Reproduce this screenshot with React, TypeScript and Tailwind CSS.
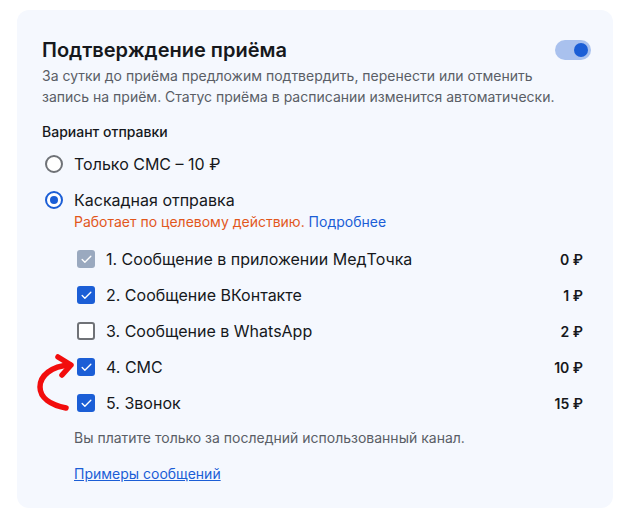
import { Check } from 'lucide-react';

const CHANNELS = [
  { label: '1. Сообщение в приложении МедТочка', price: '0 ₽', state: 'locked' },
  { label: '2. Сообщение ВКонтакте', price: '1 ₽', state: 'on' },
  { label: '3. Сообщение в WhatsApp', price: '2 ₽', state: 'off' },
  { label: '4. СМС', price: '10 ₽', state: 'on' },
  { label: '5. Звонок', price: '15 ₽', state: 'on' },
];

function Box({ state }: { state: string }) {
  if (state === 'off') {
    return <span className="h-[18px] w-[18px] rounded-[3px] border-2 border-[#6f7277] bg-white" />;
  }
  return (
    <span
      className={
        'flex h-[18px] w-[18px] items-center justify-center rounded-[3px] ' +
        (state === 'locked' ? 'bg-[#9aa9bf]' : 'bg-[#1b5ed6]')
      }
    >
      <Check className="h-[13px] w-[13px] text-white" strokeWidth={2.5} />
    </span>
  );
}

export default function App() {
  return (
    <div className="min-h-screen bg-white pl-[17px] pr-[18px] pt-[10px] font-['Inter',sans-serif]">
      <div className="relative rounded-xl bg-[#f5f8fe] px-[25px] pb-[23px] pt-[26px]">
        <div className="flex items-center justify-between">
          <h1 className="text-[20px] font-semibold leading-[28px] text-[#16181c]">Подтверждение приёма</h1>
          <span className="mr-[-3px] flex h-[20px] w-[36px] items-center justify-end rounded-full bg-[#a9c1ee] pr-[3px]">
            <span className="h-[14px] w-[14px] rounded-full bg-[#1b5ed6]" />
          </span>
        </div>
        <p className="mt-[1px] whitespace-nowrap text-[14px] leading-[21px] text-[#5a5e66]">
          За сутки до приёма предложим подтвердить, перенести или отменить
          <br />
          запись на приём. Статус приёма в расписании изменится автоматически.
        </p>

        <div className="mt-[15px] text-[14px] font-medium leading-[20px] text-[#16181c]">Вариант отправки</div>

        <div className="mt-[11px] flex items-center gap-[11px]">
          <span className="ml-[3px] h-[18px] w-[18px] rounded-full border-2 border-[#6f7277] bg-white" />
          <span className="text-[16px] leading-[22px] text-[#16181c]">Только СМС – 10 ₽</span>
        </div>
        <div className="mt-[14px] flex items-center gap-[11px]">
          <span className="ml-[3px] flex h-[18px] w-[18px] items-center justify-center rounded-full border-2 border-[#1b5ed6] bg-white">
            <span className="h-[8px] w-[8px] rounded-full bg-[#1b5ed6]" />
          </span>
          <span className="text-[16px] leading-[22px] text-[#16181c]">Каскадная отправка</span>
        </div>
        <div className="ml-[32px] mt-[1px] text-[14px] leading-[20px] text-[#e2571c]">
          Работает по целевому действию. <span className="text-[#1b5ed6]">Подробнее</span>
        </div>

        <div className="mt-[16px] flex flex-col gap-[14px] pl-[35px] pr-[5px]">
          {CHANNELS.map((c) => (
            <div key={c.label} className="flex h-[22px] items-center">
              <Box state={c.state} />
              <span className="ml-[11px] flex-1 text-[16px] leading-[22px] text-[#16181c]">{c.label}</span>
              <span className="text-[14px] font-semibold text-[#16181c]">{c.price}</span>
            </div>
          ))}
        </div>

        <p className="ml-[32px] mt-[14px] text-[14px] leading-[20px] text-[#5a5e66]">
          Вы платите только за последний использованный канал.
        </p>
        <a className="ml-[32px] mt-[16px] inline-block text-[14px] leading-[20px] text-[#1b5ed6] underline">
          Примеры сообщений
        </a>

        <svg className="absolute left-[13px] top-[340px] h-[65px] w-[50px]" viewBox="0 0 50 65" fill="none">
          <path
            d="M36 58 C21 55 10 48 10 37 C10 26 21 16 40 15"
            stroke="#f20d0d"
            strokeWidth="5.5"
            strokeLinecap="round"
          />
          <path d="M28 7 L41 15 L32 25" stroke="#f20d0d" strokeWidth="5.5" strokeLinecap="round" strokeLinejoin="round" />
        </svg>
      </div>
    </div>
  );
}
